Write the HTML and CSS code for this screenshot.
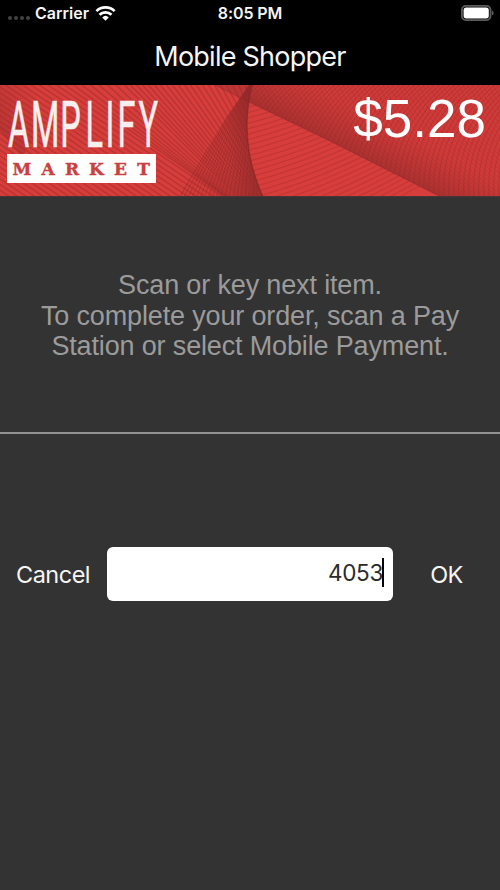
FILE: index.html
```html
<!DOCTYPE html>
<html lang="en">
<head>
<meta charset="utf-8">
<title>Mobile Shopper</title>
<link rel="stylesheet" href="styles.css">
</head>
<body>
<header class="top">
  <div class="status">
    <div class="carrier">
      <span class="dots"><i></i><i></i><i></i><i></i></span>
      <span class="carrier-name">Carrier</span>
      <svg class="wifi" width="21" height="15" viewBox="0 0 20 15">
        <g fill="none" stroke="#fff" stroke-width="2.7">
          <path d="M0.9 5.1a13 13 0 0 1 18.2 0"/>
          <path d="M4 8.8a8.4 8.4 0 0 1 12 0"/>
        </g>
        <path d="M6.7 11.4a4.8 4.8 0 0 1 6.6 0L10 14.8z" fill="#fff"/>
      </svg>
    </div>
    <span class="time">8:05 PM</span>
    <svg class="battery" width="33" height="16" viewBox="0 0 33 16">
      <rect x="0.9" y="0.9" width="28.6" height="14.2" rx="4" fill="#000" stroke="#5c5c5c" stroke-width="1.8"/>
      <rect x="2.6" y="2.6" width="25.2" height="10.8" rx="2.6" fill="#fff"/>
      <path d="M30.9 5.4q1.7.7 1.7 2.6t-1.7 2.6z" fill="#5c5c5c"/>
    </svg>
  </div>
  <h1 class="title">Mobile Shopper</h1>
</header>
<section class="banner">
  <svg class="pattern" width="500" height="112" viewBox="0 0 500 112">
    <defs>
      <clipPath id="left"><path d="M0 0H252Q238 57 263 112H0z"/></clipPath>
      <clipPath id="mesh"><path d="M252 0Q238 57 263 112H178L226 33L249 0z"/></clipPath>
      <clipPath id="lower"><path d="M249 17L330 56L441 112H263Q241 62 249 17z"/></clipPath>
      <clipPath id="upper"><path d="M252 0H500V112H441L330 56L249 17z"/></clipPath>
      <linearGradient id="edge" gradientUnits="userSpaceOnUse" x1="195" y1="66" x2="250" y2="60">
        <stop offset="0" stop-color="#8e2a2a" stop-opacity=".05"/>
        <stop offset=".6" stop-color="#8e2a2a" stop-opacity=".25"/>
        <stop offset="1" stop-color="#8e2a2a" stop-opacity=".7"/>
      </linearGradient>
      <linearGradient id="fold" gradientUnits="userSpaceOnUse" x1="345" y1="63" x2="363" y2="27">
        <stop offset="0" stop-color="#8e2a2a" stop-opacity=".6"/>
        <stop offset="1" stop-color="#a52d2b" stop-opacity=".12"/>
      </linearGradient>
      <linearGradient id="corner" gradientUnits="userSpaceOnUse" x1="0" y1="50" x2="45" y2="25">
        <stop offset="0" stop-color="#9b2b2b" stop-opacity=".5"/>
        <stop offset="1" stop-color="#9b2b2b" stop-opacity="0"/>
      </linearGradient>
    </defs>
    <rect width="500" height="112" fill="#d63d3b"/>
    <path d="M0 0H70L22 72L0 46z" fill="url(#corner)"/>
    <g id="rays" clip-path="url(#left)" fill="none" stroke="#9e2d2c" stroke-opacity=".55"/>
    <path d="M252 0Q238 57 263 112H178L226 33L249 0z" fill="url(#edge)"/>
    <path d="M215 0H252L249 17z" fill="#8e2a2a" fill-opacity=".35"/>
    <g id="weave" clip-path="url(#mesh)" fill="none" stroke="#932929" stroke-opacity=".45"/>
    <g id="arcs" clip-path="url(#lower)" fill="none" stroke="#a32d2c" stroke-opacity=".4"/>
    <path d="M252 0H500V112H441L330 56L249 17z" fill="url(#fold)"/>
    <g id="ripples" clip-path="url(#upper)" fill="none" stroke="#932b2a" stroke-opacity=".35"/>
    <path d="M215 0L249 17L330 56L441 112" fill="none" stroke="#8c2929" stroke-opacity=".5"/>
    <path d="M252 0Q238 57 263 112" fill="none" stroke="#822626" stroke-opacity=".6" stroke-width="1.5"/>
  </svg>
  <svg class="logo" width="170" height="112" viewBox="0 0 170 112" role="img" aria-label="Amplify Market">
    <text class="logo-name" transform="scale(.5 1)" y="62" x="16 62 120.5 171 211 235 277">AMPLIFY</text>
    <rect x="7" y="69" width="149" height="29" fill="#fff"/>
    <text class="logo-sub" y="89.5" x="22 48 72 96.500 120.500 143.500">MARKET</text>
  </svg>
  <div class="total">$5.28</div>
</section>
<main>
  <p class="message">Scan or key next item.<br>To complete your order, scan a Pay<br>Station or select Mobile Payment.</p>
  <div class="entry">
    <span class="cancel">Cancel</span>
    <div class="field"><span class="value">4053</span><span class="caret"></span></div>
    <span class="ok">OK</span>
  </div>
</main>
<script src="banner.js"></script>
</body>
</html>
```
FILE: styles.css
```css
* { box-sizing: border-box; }
body {
  margin: 0;
  height: 890px;
  overflow: hidden;
  background: #333;
  color: #f5f5f5;
  font-family: Inter, "Liberation Sans", sans-serif;
}
.top { height: 85px; background: #000; }
.status {
  display: grid;
  grid-template-columns: 1fr auto 1fr;
  align-items: center;
  height: 26px;
  padding: 0 6px 0 8px;
  font-size: 16px;
  font-weight: 600;
}
.carrier { display: flex; align-items: center; }
.carrier-name { margin-left: 5px; font-size: 16px; letter-spacing: 0; }
.dots { display: flex; gap: 2px; padding-top: 9px; }
.dots i { width: 4px; height: 4px; border-radius: 2px; background: #434343; }
.wifi { margin-left: 6px; }
.time { position: relative; left: -1px; letter-spacing: -.1px; }
.battery { justify-self: end; }
.title {
  margin: 0;
  height: 59px;
  line-height: 62px;
  text-align: center;
  font-size: 27px;
  font-weight: 400;
  letter-spacing: -.75px;
}
.banner {
  position: relative;
  display: flex;
  justify-content: space-between;
  height: 112px;
  border-bottom: 1px solid #4a3536;
  overflow: hidden;
}
.pattern { position: absolute; inset: 0; }
.logo { position: relative; }
.logo-name { font: 400 65px Roboto, sans-serif; fill: #fbeeee; stroke: #fbeeee; stroke-width: .6px; }
.logo-sub { font: 700 17px "DejaVu Serif", serif; fill: #c9403f; stroke: #c9403f; stroke-width: .4px; text-anchor: middle; }
.total {
  position: relative;
  padding: 3px 14px 0 0;
  font: 53px/61px "Liberation Sans", sans-serif;
  color: #fff;
}
.message {
  display: flow-root;
  margin: 0;
  height: 237px;
  padding-top: 73px;
  border-bottom: 2px solid #929292;
  text-align: center;
  white-space: nowrap;
  font: 27px/30.700px "Liberation Sans", sans-serif;
  letter-spacing: -.15px;
  color: #9b9b9b;
}
.entry {
  display: grid;
  grid-template-columns: 107px 286px 107px;
  align-items: center;
  height: 54px;
  margin-top: 113px;
  font-size: 23.500px;
}
.cancel { padding-left: 16px; letter-spacing: -.5px; }
.ok { text-align: center; letter-spacing: -.7px; }
.field {
  display: flex;
  align-items: center;
  justify-content: flex-end;
  height: 54px;
  padding: 0 9px 3px 0;
  border-radius: 6px;
  background: #fff;
  color: #2b2b2b;
}
.value { font-size: 22.500px; letter-spacing: -.3px; }
.caret { width: 2px; height: 29px; margin-left: -1px; background: #000; }
```
FILE: banner.js
```js
const NS = "http://www.w3.org/2000/svg";
function line(group, d, width) {
  const p = document.createElementNS(NS, "path");
  p.setAttribute("d", d);
  p.setAttribute("stroke-width", width);
  document.getElementById(group).appendChild(p);
}
// Rays running down to the right, steeper towards the fold.
for (let x = -190; x < 250; x += x < 120 ? 8.5 : 6) {
  const bend = Math.max(0, (x - 60) / 190);
  const angle = (34 + bend * 32) * Math.PI / 180;
  line("rays", `M${x} 0L${x + 114 / Math.tan(angle)} 114`, 1.3);
}
// Cross weave beside the fold.
for (let i = 0; i < 24; i++) {
  line("weave", `M${256 - i * 0.3} -10L${262 - i * 4.4} 122`, 1);
}
// Shallow arcs under the diagonal.
for (let i = 0; i < 30; i++) {
  const y = 20 + i * 5.4;
  line("arcs", `M235 ${y}Q330 ${y - 22} 430 ${y - 82}`, 1.1);
}
// Two crossing ripple families above the diagonal.
for (let i = 0; i < 75; i++) {
  const x = 190 + i * 5;
  line("ripples", `M${x + 60} -5Q${x - 5} 50 ${x + 5} 120`, 1.1);
  line("ripples", `M${x - 30} -5Q${x + 5} 60 ${x + 90} 120`, 0.6);
}
```
